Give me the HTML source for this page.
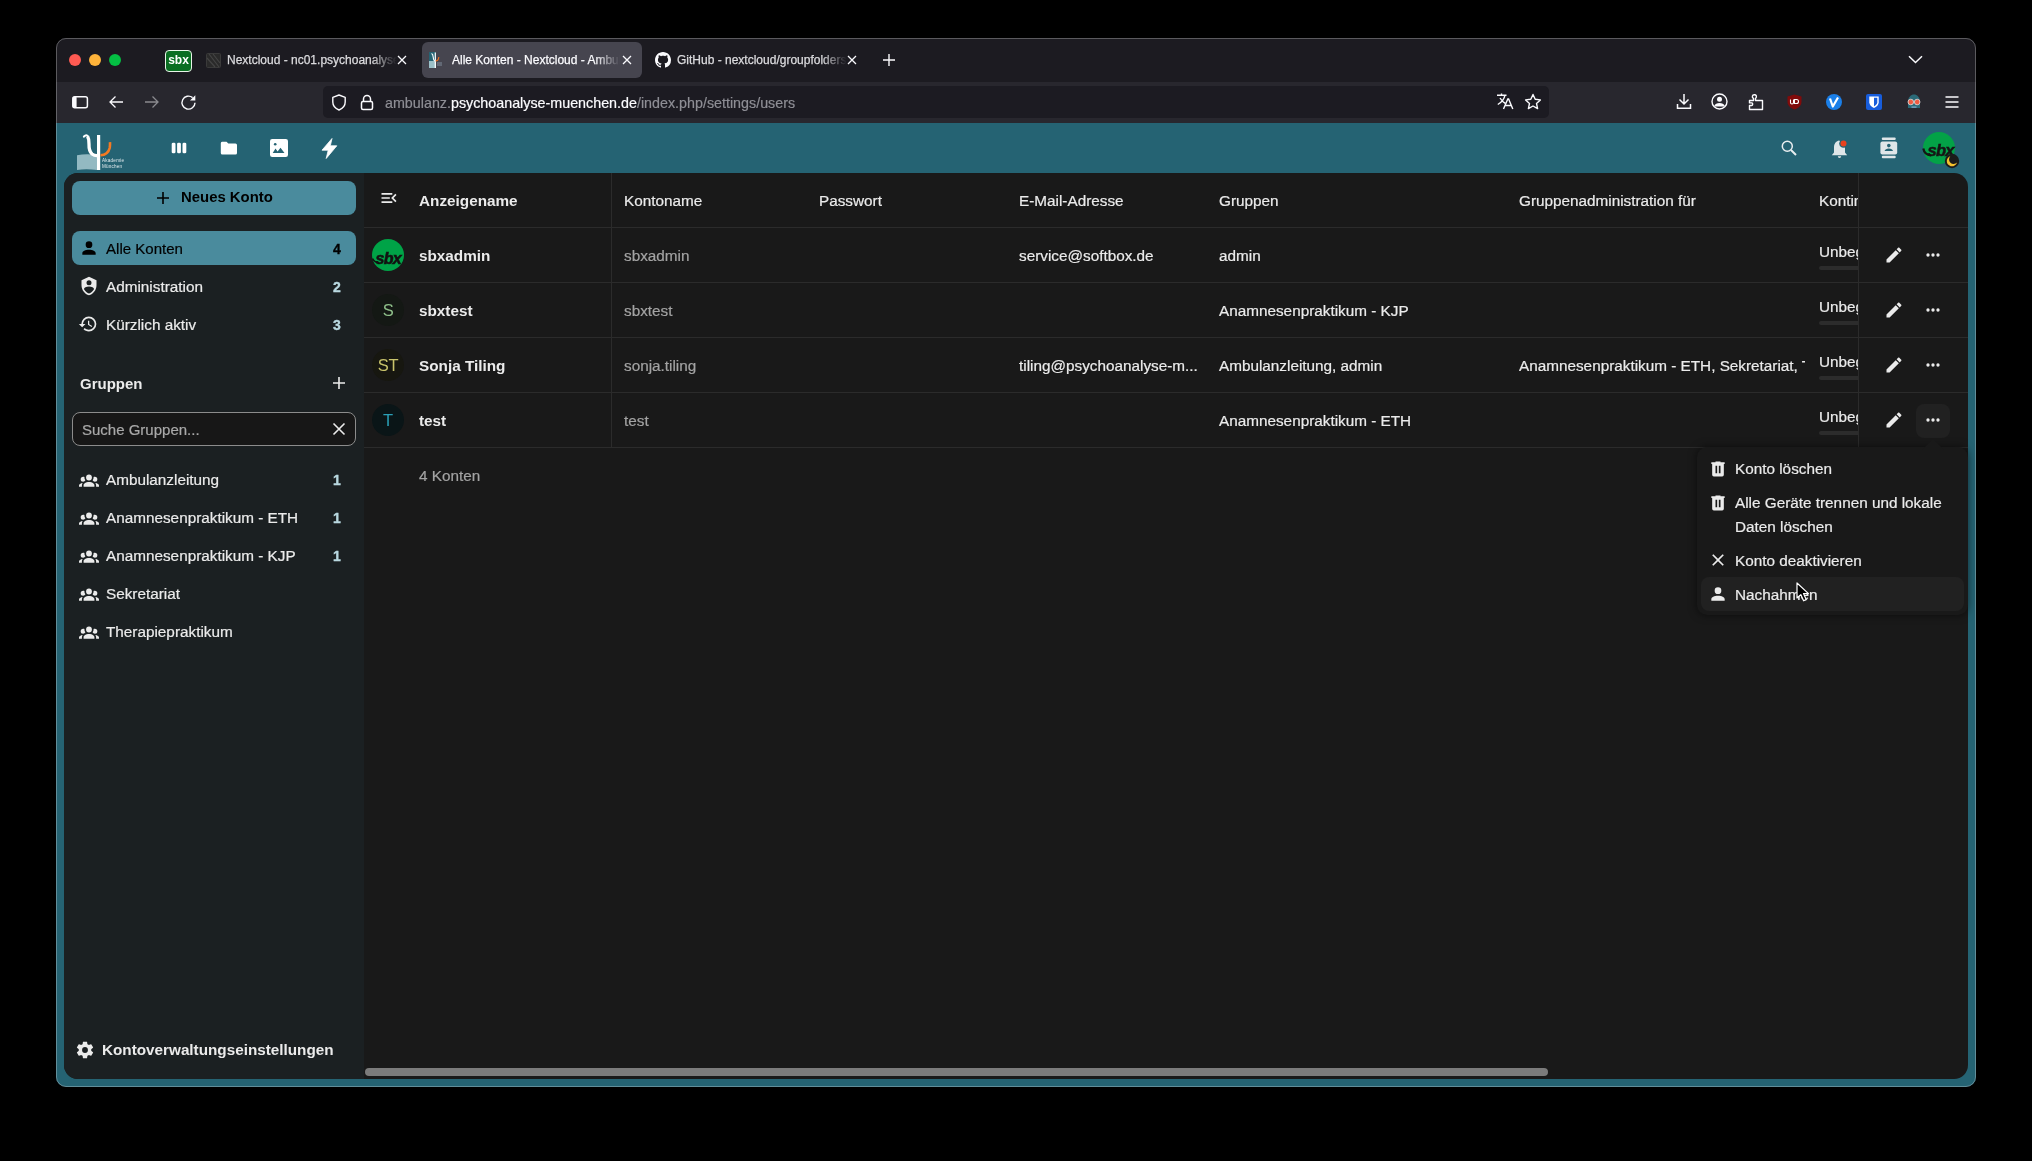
<!DOCTYPE html>
<html><head><meta charset="utf-8">
<style>
*{box-sizing:border-box;margin:0;padding:0}
html,body{width:2032px;height:1161px;overflow:hidden;background:#000;font-family:"Liberation Sans",sans-serif}
.a{position:absolute;will-change:transform}
svg{display:block}
#win{position:absolute;left:56px;top:38px;width:1920px;height:1049px;border-radius:10px;overflow:hidden;background:#1c1b22}
#winborder{position:absolute;left:56px;top:38px;width:1920px;height:1049px;border-radius:10px;border:1px solid rgba(255,255,255,0.28);pointer-events:none}
#tabs{position:absolute;left:0;top:0;width:1920px;height:44px;background:#1c1b21}
#toolbar{position:absolute;left:0;top:44px;width:1920px;height:41px;background:#28272e}
#nchead{position:absolute;left:0;top:85px;width:1920px;height:964px;background:#256373}
#content{position:absolute;left:8px;top:50px;width:1904px;height:906px;border-radius:14px;overflow:hidden;background:#191919}
#nav{position:absolute;left:0;top:0;width:300px;height:906px;background:#1b2022}
.tt{-webkit-text-stroke:0.25px currentColor;color:#fbfbfe;font-size:12px;white-space:nowrap;overflow:hidden}
.nc{font-size:15.3px;color:#ebebeb;white-space:nowrap;margin-top:1px}
.b{font-weight:700}
.cnt{-webkit-text-stroke:0.35px currentColor}
.nc:not(.b){-webkit-text-stroke:0.2px currentColor}
</style></head><body>
<div id="win">
  <div id="tabs"></div>
  <div id="toolbar"></div>
  <div id="nchead">
    <div id="content">
      <div id="nav"></div>
    </div>
  </div>
</div>
<!-- ============ TAB STRIP ============ -->
<div class="a" style="left:69px;top:54px;width:12px;height:12px;border-radius:50%;background:#fe5a52"></div>
<div class="a" style="left:89px;top:54px;width:12px;height:12px;border-radius:50%;background:#feb33a"></div>
<div class="a" style="left:109px;top:54px;width:12px;height:12px;border-radius:50%;background:#04bf43"></div>
<!-- pinned sbx -->
<div class="a" style="left:165px;top:50px;width:27px;height:22px;border-radius:4px;background:#0a6e22;border:1.5px solid #e8f5e8;color:#fff;font-weight:700;font-size:12px;line-height:19px;text-align:center;letter-spacing:0px">sbx</div>
<!-- tab 2 -->
<svg class="a" style="left:206px;top:53px" width="15" height="15" viewBox="0 0 15 15"><rect x="0.5" y="0.5" width="14" height="14" rx="1" fill="#2a2a2a" stroke="#3a3a3a"/><path d="M3 1L13 14M7 1L14 10M1 5L9 14" stroke="#444" stroke-width="1.2"/></svg>
<div class="a tt" style="left:227px;top:52px;width:170px;height:17px;line-height:17px;color:#dcdcdf;-webkit-mask-image:linear-gradient(90deg,#000 85%,transparent 100%)">Nextcloud - nc01.psychoanalyse-muenchen.de</div>
<svg class="a" style="left:396px;top:54px" width="12" height="12" viewBox="0 0 12 12"><path d="M2 2L10 10M10 2L2 10" stroke="#fbfbfe" stroke-width="1.3"/></svg>
<!-- active tab -->
<div class="a" style="left:422px;top:42px;width:220px;height:36px;border-radius:6px;background:#46454f"></div>
<svg class="a" style="left:429px;top:52px" width="17" height="16" viewBox="0 0 17 16"><rect x="0" y="0" width="7" height="9" fill="#256373"/><rect x="0" y="9" width="7" height="7" fill="#9cc0c8"/><path d="M2.5 1.5Q4 2 4.2 5Q4.5 9 6.5 9" stroke="#fff" stroke-width="1.1" fill="none"/><path d="M6.3 0.5V16" stroke="#fff" stroke-width="1.2"/><path d="M6.5 9Q9.5 9 9.8 5" stroke="#f07020" stroke-width="1.1" fill="none"/><path d="M8 11H13M8 13H13" stroke="#9ab" stroke-width="0.7"/></svg>
<div class="a tt" style="left:452px;top:52px;width:168px;height:17px;line-height:17px;color:#fbfbfe;-webkit-mask-image:linear-gradient(90deg,#000 85%,transparent 100%)">Alle Konten - Nextcloud - Ambulanz</div>
<svg class="a" style="left:621px;top:54px" width="12" height="12" viewBox="0 0 12 12"><path d="M2 2L10 10M10 2L2 10" stroke="#fbfbfe" stroke-width="1.3"/></svg>
<!-- github tab -->
<svg class="a" style="left:655px;top:52px" width="16" height="16" viewBox="0 0 16 16"><path fill="#fbfbfe" d="M8 0C3.58 0 0 3.58 0 8c0 3.54 2.29 6.53 5.47 7.59.4.07.55-.17.55-.38 0-.19-.01-.82-.01-1.49-2.01.37-2.53-.49-2.69-.94-.09-.23-.48-.94-.82-1.13-.28-.15-.68-.52-.01-.53.63-.01 1.08.58 1.23.82.72 1.21 1.87.87 2.33.66.07-.52.28-.87.51-1.07-1.78-.2-3.64-.89-3.64-3.95 0-.87.31-1.59.82-2.15-.08-.2-.36-1.02.08-2.12 0 0 .67-.21 2.2.82.64-.18 1.32-.27 2-.27.68 0 1.36.09 2 .27 1.53-1.04 2.2-.82 2.2-.82.44 1.1.16 1.92.08 2.12.51.56.82 1.27.82 2.15 0 3.07-1.87 3.75-3.65 3.95.29.25.54.73.54 1.48 0 1.07-.01 1.93-.01 2.2 0 .21.15.46.55.38A8.013 8.013 0 0016 8c0-4.42-3.58-8-8-8z"/></svg>
<div class="a tt" style="left:677px;top:52px;width:170px;height:17px;line-height:17px;color:#dcdcdf;-webkit-mask-image:linear-gradient(90deg,#000 85%,transparent 100%)">GitHub - nextcloud/groupfolders: Admin</div>
<svg class="a" style="left:846px;top:54px" width="12" height="12" viewBox="0 0 12 12"><path d="M2 2L10 10M10 2L2 10" stroke="#fbfbfe" stroke-width="1.3"/></svg>
<svg class="a" style="left:882px;top:53px" width="14" height="14" viewBox="0 0 14 14"><path d="M7 1V13M1 7H13" stroke="#fbfbfe" stroke-width="1.4"/></svg>
<svg class="a" style="left:1908px;top:55px" width="15" height="9" viewBox="0 0 15 9"><path d="M1 1.2L7.5 7.5L14 1.2" stroke="#fbfbfe" stroke-width="1.5" fill="none"/></svg>

<!-- ============ TOOLBAR ============ -->
<svg class="a" style="left:72px;top:96px" width="17" height="13" viewBox="0 0 17 13"><rect x="0.8" y="0.8" width="14.6" height="11" rx="2" fill="none" stroke="#fbfbfe" stroke-width="1.5"/><rect x="0.8" y="0.8" width="3.8" height="11" rx="1" fill="#fbfbfe"/></svg>
<svg class="a" style="left:108px;top:95px" width="16" height="14" viewBox="0 0 16 14"><path d="M15 7H2M7.5 1.5L2 7L7.5 12.5" stroke="#fbfbfe" stroke-width="1.3" fill="none"/></svg>
<svg class="a" style="left:144px;top:95px" width="16" height="14" viewBox="0 0 16 14"><path d="M1 7H14M8.5 1.5L14 7L8.5 12.5" stroke="#8a8a8f" stroke-width="1.3" fill="none"/></svg>
<svg class="a" style="left:180px;top:94px" width="17" height="17" viewBox="0 0 17 17"><path d="M15 8.8A6.5 6.5 0 1 1 12.6 3.6" stroke="#fbfbfe" stroke-width="1.4" fill="none"/><path d="M15.3 1.2V6.5H10Z" fill="#fbfbfe"/></svg>
<!-- url bar -->
<div class="a" style="left:323px;top:86px;width:1226px;height:32px;border-radius:5px;background:#1c1b22"></div>
<svg class="a" style="left:331px;top:94px" width="16" height="17" viewBox="0 0 16 17"><path d="M8 1L1.8 3.3V8C1.8 11.8 4.5 14.6 8 16C11.5 14.6 14.2 11.8 14.2 8V3.3Z" stroke="#fbfbfe" stroke-width="1.4" fill="none" stroke-linejoin="round"/></svg>
<svg class="a" style="left:360px;top:94px" width="14" height="17" viewBox="0 0 14 17"><path d="M3.5 7.5V5A3.5 3.5 0 0 1 10.5 5V7.5" stroke="#fbfbfe" stroke-width="1.5" fill="none"/><rect x="1.5" y="7.5" width="11" height="8" rx="1.5" stroke="#fbfbfe" stroke-width="1.5" fill="none"/></svg>
<div class="a" style="left:385px;top:94px;height:18px;line-height:18px;font-size:14.3px;color:#8e8e95;white-space:nowrap;-webkit-text-stroke:0.2px currentColor">ambulanz.<span style="color:#fbfbfe">psychoanalyse-muenchen.de</span>/index.php/settings/users</div>
<svg class="a" style="left:1496px;top:93px" width="18" height="17" viewBox="0 0 18 17"><path d="M1 2.2H10.5M5.5 0.5V2.2M9 2.2C8.2 6 5.5 9.5 1.8 11.5M4 5C5.5 7.5 7.5 9.5 9.5 10.5" stroke="#fbfbfe" stroke-width="1.4" fill="none"/><path d="M7.5 16L11.8 6H12.6L16.8 16M9 12.5H15.3" stroke="#fbfbfe" stroke-width="1.4" fill="none"/></svg>
<svg class="a" style="left:1524px;top:93px" width="18" height="18" viewBox="0 0 18 18"><path d="M9 1.5L11.2 6.3L16.4 6.9L12.5 10.4L13.6 15.6L9 13L4.4 15.6L5.5 10.4L1.6 6.9L6.8 6.3Z" stroke="#fbfbfe" stroke-width="1.4" fill="none" stroke-linejoin="round"/></svg>
<!-- right toolbar icons -->
<svg class="a" style="left:1676px;top:93px" width="16" height="17" viewBox="0 0 16 17"><path d="M8 1V11M3.5 6.5L8 11L12.5 6.5M1.5 11V15.3H14.5V11" stroke="#fbfbfe" stroke-width="1.5" fill="none"/></svg>
<svg class="a" style="left:1711px;top:93px" width="17" height="17" viewBox="0 0 17 17"><circle cx="8.5" cy="8.5" r="7.5" stroke="#fbfbfe" stroke-width="1.4" fill="none"/><circle cx="8.5" cy="6.3" r="2.5" fill="#fbfbfe"/><path d="M3.5 12.5Q4.5 10 8.5 10Q12.5 10 13.5 12.5V13.5H3.5Z" fill="#fbfbfe"/></svg>
<svg class="a" style="left:1748px;top:93px" width="17" height="18" viewBox="0 0 17 18"><path d="M1.5 7.5H5.5V5.5C4.5 5 4.2 4 4.4 3.2C4.8 1.5 7.5 1.2 8.3 2.8C8.7 3.8 8.3 4.8 7.5 5.5V7.5H14.5V16.5H1.5V12.5H3.5C4.5 12.3 4.8 11.5 4.6 10.8C4.4 10 3.5 9.7 2.8 9.9H1.5Z" stroke="#fbfbfe" stroke-width="1.4" fill="none" stroke-linejoin="round"/></svg>
<svg class="a" style="left:1787px;top:94px" width="15" height="16" viewBox="0 0 15 16"><path d="M7.5 0.5L14.5 2.5V8C14.5 11.5 11.5 14.2 7.5 15.5C3.5 14.2 0.5 11.5 0.5 8V2.5Z" fill="#800b0b"/><path d="M3.5 5.5V8.5A1.5 1.5 0 0 0 6.5 8.5V5.5M7.5 5.5H9.5A2 2 0 0 1 9.5 9.5H7.5Z" stroke="#fff" stroke-width="1.1" fill="none"/></svg>
<svg class="a" style="left:1826px;top:94px" width="16" height="16" viewBox="0 0 16 16"><circle cx="8" cy="8" r="8" fill="#1b7fe8"/><path d="M4 4.5L6.8 12.5L12 3.5" stroke="#fff" stroke-width="2.2" fill="none" stroke-linejoin="round"/></svg>
<svg class="a" style="left:1866px;top:94px" width="16" height="16" viewBox="0 0 16 16"><rect width="16" height="16" rx="2" fill="#175ddc"/><path d="M3.3 2.5H12.7V8.3C12.7 11 10.5 12.8 8 14C5.5 12.8 3.3 11 3.3 8.3Z" fill="#fff"/><path d="M8 3.8H11.3V8.3C11.3 10 9.8 11.3 8 12.3Z" fill="#175ddc"/></svg>
<svg class="a" style="left:1906px;top:94px" width="16" height="16" viewBox="0 0 16 16"><path d="M2 8C2 3 5 0.5 8 0.5C11 0.5 14 3 14 8V14H2Z" fill="#2a6a78"/><circle cx="4.8" cy="8" r="2.8" fill="#f05a40" stroke="#ddd" stroke-width="0.8"/><circle cx="11.2" cy="8" r="2.8" fill="#f05a40" stroke="#ddd" stroke-width="0.8"/><rect x="5.5" y="12.5" width="5" height="1.2" fill="#8ac"/></svg>
<svg class="a" style="left:1945px;top:96px" width="14" height="12" viewBox="0 0 14 12"><path d="M0.5 1H13.5M0.5 6H13.5M0.5 11H13.5" stroke="#fbfbfe" stroke-width="1.5"/></svg>

<!-- ============ NC HEADER ============ -->
<svg class="a" style="left:70px;top:128px" width="60" height="47" viewBox="0 0 60 47">
 <path d="M7 27.3Q16 25.5 27 27V42Q16 40.5 7 42Z" fill="#93b9c2"/>
 <rect x="27" y="7" width="3.2" height="35" fill="#fff"/>
 <path d="M14 8.6Q16.5 6 18 8.5" stroke="#fff" stroke-width="2.2" fill="none" stroke-linecap="round"/><path d="M17.6 8.3Q19.2 11 19 16Q18.8 23 22 26Q24.5 27.8 27.5 27.6" stroke="#fff" stroke-width="3.3" fill="none"/>
 <path d="M30.5 27.3Q38 27 39.7 20Q40.2 17 40 14.2" stroke="#f47a22" stroke-width="2.6" fill="none"/>
 <text x="32" y="34" font-size="4.6" fill="#dfe9ec" font-family="Liberation Sans" textLength="22">Akademie</text>
 <text x="32" y="39.8" font-size="4.6" fill="#dfe9ec" font-family="Liberation Sans" textLength="20">München</text>
</svg>
<svg class="a" style="left:171px;top:142px" width="16" height="12" viewBox="0 0 16 12"><rect x="0.7" y="0.7" width="3.8" height="10.6" rx="1.4" fill="#fff"/><rect x="6.1" y="0.7" width="3.8" height="10.6" rx="1.4" fill="#fff"/><rect x="11.5" y="0.7" width="3.8" height="10.6" rx="1.4" fill="#fff"/></svg>
<svg class="a" style="left:220px;top:141px" width="18" height="14" viewBox="0 0 18 14"><path d="M2 0.8H6.5L8.3 2.6H15.5A1.5 1.5 0 0 1 17 4.1V12A1.5 1.5 0 0 1 15.5 13.5H2.3A1.5 1.5 0 0 1 0.8 12V2.2A1.4 1.4 0 0 1 2 0.8Z" fill="#fff"/></svg>
<svg class="a" style="left:269px;top:138px" width="20" height="20" viewBox="0 0 20 20"><rect x="1" y="1" width="18" height="18" rx="2.2" fill="#fff"/><circle cx="6.2" cy="6.2" r="1.3" fill="#256373"/><path d="M3.7 15L6.5 10.5L8.6 13.5L11.5 9.8L15.5 15Z" fill="#256373"/></svg>
<svg class="a" style="left:321px;top:138px" width="17" height="21" viewBox="0 0 17 21"><path d="M11 0.5L1 12.2H7.2L5.2 20.5L15.8 7.8H9.3Z" fill="#fff" stroke="#fff" stroke-width="0.8" stroke-linejoin="round"/></svg>
<!-- right header -->
<svg class="a" style="left:1780px;top:139px" width="18" height="18" viewBox="0 0 18 18"><circle cx="7.3" cy="7.3" r="5" stroke="#e9eef0" stroke-width="1.5" fill="none"/><path d="M11 11L16 16" stroke="#e9eef0" stroke-width="1.9"/></svg>
<svg class="a" style="left:1830px;top:138px" width="20" height="20" viewBox="0 0 20 20"><path d="M9.3 2.5C5.6 3.2 4 6 4 9.5V14.5L1.8 17.2H17.2L15 14.5V9.5" fill="#dfe6e8"/><path d="M7.8 18.2H11.2A1.7 1.7 0 0 1 7.8 18.2Z" fill="#dfe6e8"/><circle cx="13.5" cy="5.5" r="4.3" fill="#256373"/><circle cx="13.5" cy="5.5" r="3" fill="#e8421e"/></svg>
<svg class="a" style="left:1879px;top:137px" width="20" height="22" viewBox="0 0 20 22"><rect x="2.8" y="0.6" width="13.9" height="2.4" rx="1" fill="#dfe6e8"/><rect x="2.8" y="18.8" width="13.9" height="2.4" rx="1" fill="#dfe6e8"/><rect x="1.4" y="4.4" width="16.8" height="13" rx="2" fill="#dfe6e8"/><circle cx="9.8" cy="8.6" r="1.8" fill="#256373"/><path d="M5.6 13.9Q6.3 11.4 9.8 11.4Q13.3 11.4 14 13.9Z" fill="#256373"/></svg>
<svg class="a" style="left:1922px;top:131px" width="38" height="38" viewBox="0 0 38 38">
 <circle cx="17" cy="17" r="16" fill="#03a247"/>
 <text x="5.5" y="25" font-size="16.5" font-weight="700" font-style="italic" fill="#151515" stroke="#151515" stroke-width="0.5" font-family="Liberation Sans" letter-spacing="-0.8">sbx</text>
 <path d="M1.3 17.5Q2.5 24 9 24.3" stroke="#151515" stroke-width="2.2" fill="none"/>
 <circle cx="30" cy="30" r="7.2" fill="#1b1b1b"/>
 <path d="M28.3 25.2A5.2 5.2 0 1 0 35 31.6A4.2 4.2 0 0 1 28.3 25.2Z" fill="#f5c12e"/>
</svg>

<!-- ============ NAVIGATION ============ -->
<div class="a" style="left:72px;top:181px;width:284px;height:34px;border-radius:8px;background:#4a8b9d"></div>
<svg class="a" style="left:156px;top:191px" width="14" height="14" viewBox="0 0 14 14"><path d="M7 1V13M1 7H13" stroke="#000" stroke-width="1.6"/></svg>
<div class="a nc b" style="left:181px;top:187px;line-height:18px;color:#000;font-size:14.9px">Neues Konto</div>

<div class="a" style="left:72px;top:231px;width:284px;height:34px;border-radius:8px;background:#4a8b9d"></div>
<svg class="a nv" style="left:79px;top:238px" width="20" height="20" viewBox="0 0 24 24"><path fill="#000" d="M12,4A4,4 0 0,1 16,8A4,4 0 0,1 12,12A4,4 0 0,1 8,8A4,4 0 0,1 12,4M12,14C16.42,14 20,15.79 20,18V20H4V18C4,15.79 7.58,14 12,14Z"/></svg>
<div class="a nc" style="left:106px;top:239px;line-height:18px;color:#000;font-size:15.05px">Alle Konten</div>
<div class="a nc b cnt" style="left:327px;top:239px;width:20px;text-align:center;line-height:18px;color:#000;font-size:14px">4</div>

<svg class="a" style="left:79px;top:276px" width="20" height="20" viewBox="0 0 24 24"><path fill="#ebebeb" d="M12,1L3,5V11C3,16.55 6.84,21.74 12,23C17.16,21.74 21,16.55 21,11V5L12,1M12,5A3,3 0 0,1 15,8A3,3 0 0,1 12,11A3,3 0 0,1 9,8A3,3 0 0,1 12,5M17.13,17C15.92,18.85 14.11,20.24 12,20.92C9.89,20.24 8.08,18.85 6.87,17C6.53,16.5 6.24,16 6,15.47C6,13.82 8.71,12.47 12,12.47C15.29,12.47 18,13.79 18,15.47C17.76,16 17.47,16.5 17.13,17Z"/></svg>
<div class="a nc" style="left:106px;top:277px;line-height:18px;font-size:15.3px">Administration</div>
<div class="a nc b cnt" style="left:327px;top:277px;width:20px;text-align:center;line-height:18px;color:#b9d8e0;font-size:14px">2</div>

<svg class="a" style="left:78px;top:314px" width="20" height="20" viewBox="0 0 24 24"><path fill="#ebebeb" d="M13.5,8H12V13L16.28,15.54L17,14.33L13.5,12.25V8M13,3A9,9 0 0,0 4,12H1L4.96,16.03L9,12H6A7,7 0 0,1 13,5A7,7 0 0,1 20,12A7,7 0 0,1 13,19C11.07,19 9.32,18.21 8.06,16.94L6.64,18.36C8.27,20 10.5,21 13,21A9,9 0 0,0 22,12A9,9 0 0,0 13,3"/></svg>
<div class="a nc" style="left:106px;top:315px;line-height:18px;font-size:15.3px">Kürzlich aktiv</div>
<div class="a nc b cnt" style="left:327px;top:315px;width:20px;text-align:center;line-height:18px;color:#b9d8e0;font-size:14px">3</div>

<div class="a nc b" style="left:80px;top:374px;line-height:18px;font-size:15px">Gruppen</div>
<svg class="a" style="left:332px;top:376px" width="14" height="14" viewBox="0 0 14 14"><path d="M7 1V13M1 7H13" stroke="#ebebeb" stroke-width="1.6"/></svg>

<div class="a" style="left:72px;top:412px;width:284px;height:34px;border-radius:8px;background:#171717;border:1.5px solid #8c8c8c"></div>
<div class="a nc" style="left:82px;top:420px;line-height:18px;font-size:15px;color:#a9a9a9">Suche Gruppen...</div>
<svg class="a" style="left:332px;top:422px" width="14" height="14" viewBox="0 0 14 14"><path d="M1.5 1.5L12.5 12.5M12.5 1.5L1.5 12.5" stroke="#ebebeb" stroke-width="1.6"/></svg>
<svg class="a" style="left:79px;top:470px" width="20" height="20" viewBox="0 0 24 24"><path fill="#ebebeb" d="M12,5.5A3.5,3.5 0 0,1 15.5,9A3.5,3.5 0 0,1 12,12.5A3.5,3.5 0 0,1 8.5,9A3.5,3.5 0 0,1 12,5.5M5,8C5.56,8 6.08,8.15 6.53,8.42C6.38,9.85 6.8,11.27 7.66,12.38C7.16,13.34 6.16,14 5,14A3,3 0 0,1 2,11A3,3 0 0,1 5,8M19,8A3,3 0 0,1 22,11A3,3 0 0,1 19,14C17.84,14 16.84,13.34 16.34,12.38C17.2,11.27 17.62,9.85 17.47,8.42C17.92,8.15 18.44,8 19,8M5.5,18.25C5.5,16.18 8.41,14.5 12,14.5C15.59,14.5 18.5,16.18 18.5,18.25V20H5.5V18.25M0,20V18.5C0,17.11 1.89,15.94 4.45,15.6C3.86,16.28 3.5,17.22 3.5,18.25V20H0M24,20H20.5V18.25C20.5,17.22 20.14,16.28 19.55,15.6C22.11,15.94 24,17.11 24,18.5V20Z"/></svg>
<div class="a nc" style="left:106px;top:470px;line-height:18px;font-size:15.3px">Ambulanzleitung</div>
<div class="a nc b cnt" style="left:327px;top:470px;width:20px;text-align:center;line-height:18px;color:#b9d8e0;font-size:14px">1</div>
<svg class="a" style="left:79px;top:508px" width="20" height="20" viewBox="0 0 24 24"><path fill="#ebebeb" d="M12,5.5A3.5,3.5 0 0,1 15.5,9A3.5,3.5 0 0,1 12,12.5A3.5,3.5 0 0,1 8.5,9A3.5,3.5 0 0,1 12,5.5M5,8C5.56,8 6.08,8.15 6.53,8.42C6.38,9.85 6.8,11.27 7.66,12.38C7.16,13.34 6.16,14 5,14A3,3 0 0,1 2,11A3,3 0 0,1 5,8M19,8A3,3 0 0,1 22,11A3,3 0 0,1 19,14C17.84,14 16.84,13.34 16.34,12.38C17.2,11.27 17.62,9.85 17.47,8.42C17.92,8.15 18.44,8 19,8M5.5,18.25C5.5,16.18 8.41,14.5 12,14.5C15.59,14.5 18.5,16.18 18.5,18.25V20H5.5V18.25M0,20V18.5C0,17.11 1.89,15.94 4.45,15.6C3.86,16.28 3.5,17.22 3.5,18.25V20H0M24,20H20.5V18.25C20.5,17.22 20.14,16.28 19.55,15.6C22.11,15.94 24,17.11 24,18.5V20Z"/></svg>
<div class="a nc" style="left:106px;top:508px;line-height:18px;font-size:15.3px">Anamnesenpraktikum - ETH</div>
<div class="a nc b cnt" style="left:327px;top:508px;width:20px;text-align:center;line-height:18px;color:#b9d8e0;font-size:14px">1</div>
<svg class="a" style="left:79px;top:546px" width="20" height="20" viewBox="0 0 24 24"><path fill="#ebebeb" d="M12,5.5A3.5,3.5 0 0,1 15.5,9A3.5,3.5 0 0,1 12,12.5A3.5,3.5 0 0,1 8.5,9A3.5,3.5 0 0,1 12,5.5M5,8C5.56,8 6.08,8.15 6.53,8.42C6.38,9.85 6.8,11.27 7.66,12.38C7.16,13.34 6.16,14 5,14A3,3 0 0,1 2,11A3,3 0 0,1 5,8M19,8A3,3 0 0,1 22,11A3,3 0 0,1 19,14C17.84,14 16.84,13.34 16.34,12.38C17.2,11.27 17.62,9.85 17.47,8.42C17.92,8.15 18.44,8 19,8M5.5,18.25C5.5,16.18 8.41,14.5 12,14.5C15.59,14.5 18.5,16.18 18.5,18.25V20H5.5V18.25M0,20V18.5C0,17.11 1.89,15.94 4.45,15.6C3.86,16.28 3.5,17.22 3.5,18.25V20H0M24,20H20.5V18.25C20.5,17.22 20.14,16.28 19.55,15.6C22.11,15.94 24,17.11 24,18.5V20Z"/></svg>
<div class="a nc" style="left:106px;top:546px;line-height:18px;font-size:15.3px">Anamnesenpraktikum - KJP</div>
<div class="a nc b cnt" style="left:327px;top:546px;width:20px;text-align:center;line-height:18px;color:#b9d8e0;font-size:14px">1</div>
<svg class="a" style="left:79px;top:584px" width="20" height="20" viewBox="0 0 24 24"><path fill="#ebebeb" d="M12,5.5A3.5,3.5 0 0,1 15.5,9A3.5,3.5 0 0,1 12,12.5A3.5,3.5 0 0,1 8.5,9A3.5,3.5 0 0,1 12,5.5M5,8C5.56,8 6.08,8.15 6.53,8.42C6.38,9.85 6.8,11.27 7.66,12.38C7.16,13.34 6.16,14 5,14A3,3 0 0,1 2,11A3,3 0 0,1 5,8M19,8A3,3 0 0,1 22,11A3,3 0 0,1 19,14C17.84,14 16.84,13.34 16.34,12.38C17.2,11.27 17.62,9.85 17.47,8.42C17.92,8.15 18.44,8 19,8M5.5,18.25C5.5,16.18 8.41,14.5 12,14.5C15.59,14.5 18.5,16.18 18.5,18.25V20H5.5V18.25M0,20V18.5C0,17.11 1.89,15.94 4.45,15.6C3.86,16.28 3.5,17.22 3.5,18.25V20H0M24,20H20.5V18.25C20.5,17.22 20.14,16.28 19.55,15.6C22.11,15.94 24,17.11 24,18.5V20Z"/></svg>
<div class="a nc" style="left:106px;top:584px;line-height:18px;font-size:15.3px">Sekretariat</div>
<svg class="a" style="left:79px;top:622px" width="20" height="20" viewBox="0 0 24 24"><path fill="#ebebeb" d="M12,5.5A3.5,3.5 0 0,1 15.5,9A3.5,3.5 0 0,1 12,12.5A3.5,3.5 0 0,1 8.5,9A3.5,3.5 0 0,1 12,5.5M5,8C5.56,8 6.08,8.15 6.53,8.42C6.38,9.85 6.8,11.27 7.66,12.38C7.16,13.34 6.16,14 5,14A3,3 0 0,1 2,11A3,3 0 0,1 5,8M19,8A3,3 0 0,1 22,11A3,3 0 0,1 19,14C17.84,14 16.84,13.34 16.34,12.38C17.2,11.27 17.62,9.85 17.47,8.42C17.92,8.15 18.44,8 19,8M5.5,18.25C5.5,16.18 8.41,14.5 12,14.5C15.59,14.5 18.5,16.18 18.5,18.25V20H5.5V18.25M0,20V18.5C0,17.11 1.89,15.94 4.45,15.6C3.86,16.28 3.5,17.22 3.5,18.25V20H0M24,20H20.5V18.25C20.5,17.22 20.14,16.28 19.55,15.6C22.11,15.94 24,17.11 24,18.5V20Z"/></svg>
<div class="a nc" style="left:106px;top:622px;line-height:18px;font-size:15.3px">Therapiepraktikum</div>
<svg class="a" style="left:75px;top:1040px" width="20" height="20" viewBox="0 0 24 24"><path fill="#ebebeb" d="M12,15.5A3.5,3.5 0 0,1 8.5,12A3.5,3.5 0 0,1 12,8.5A3.5,3.5 0 0,1 15.5,12A3.5,3.5 0 0,1 12,15.5M19.43,12.97C19.47,12.65 19.5,12.33 19.5,12C19.5,11.67 19.47,11.34 19.43,11L21.54,9.37C21.73,9.22 21.78,8.95 21.66,8.73L19.66,5.27C19.54,5.05 19.27,4.96 19.050,5.05L16.56,6.05C16.04,5.66 15.5,5.32 14.87,5.07L14.5,2.42C14.46,2.18 14.25,2 14,2H10C9.75,2 9.54,2.18 9.5,2.42L9.13,5.07C8.5,5.32 7.96,5.66 7.44,6.05L4.95,5.05C4.73,4.96 4.46,5.05 4.34,5.27L2.34,8.73C2.21,8.95 2.27,9.22 2.46,9.37L4.57,11C4.53,11.34 4.5,11.67 4.5,12C4.5,12.33 4.53,12.65 4.57,12.97L2.46,14.63C2.27,14.78 2.21,15.05 2.34,15.27L4.34,18.73C4.46,18.950 4.73,19.03 4.95,18.95L7.44,17.94C7.96,18.34 8.5,18.68 9.13,18.93L9.5,21.58C9.54,21.82 9.75,22 10,22H14C14.25,22 14.46,21.82 14.5,21.58L14.87,18.93C15.5,18.67 16.04,18.34 16.56,17.94L19.05,18.95C19.27,19.03 19.54,18.95 19.66,18.73L21.66,15.27C21.78,15.05 21.73,14.78 21.54,14.63L19.43,12.97Z"/></svg>
<div class="a nc b" style="left:102px;top:1040px;line-height:18px;font-size:15.27px">Kontoverwaltungseinstellungen</div>
<svg class="a" style="left:379px;top:188px" width="20" height="20" viewBox="0 0 24 24"><path fill="#ebebeb" d="M21,15.61L19.59,17L14.58,12L19.59,7L21,8.39L17.44,12L21,15.61M3,6H16V8H3V6M3,13V11H13V13H3M3,18V16H16V18H3Z"/></svg>
<div class="a nc b" style="left:419px;top:191px;line-height:18px">Anzeigename</div>
<div class="a nc" style="left:624px;top:191px;line-height:18px">Kontoname</div>
<div class="a nc" style="left:819px;top:191px;line-height:18px">Passwort</div>
<div class="a nc" style="left:1019px;top:191px;line-height:18px">E-Mail-Adresse</div>
<div class="a nc" style="left:1219px;top:191px;line-height:18px">Gruppen</div>
<div class="a nc" style="left:1519px;top:191px;line-height:18px">Gruppenadministration für</div>
<div class="a" style="left:1819px;top:191px;width:39px;overflow:hidden"><div class="nc" style="line-height:18px">Kontingent</div></div>
<div class="a" style="left:364px;top:227px;width:1604px;height:1px;background:#2b2b2b"></div>
<div class="a" style="left:364px;top:282px;width:1604px;height:1px;background:#2b2b2b"></div>
<div class="a" style="left:364px;top:337px;width:1604px;height:1px;background:#2b2b2b"></div>
<div class="a" style="left:364px;top:392px;width:1604px;height:1px;background:#2b2b2b"></div>
<div class="a" style="left:364px;top:447px;width:1604px;height:1px;background:#2b2b2b"></div>
<div class="a" style="left:611px;top:173px;width:1px;height:274px;background:#2b2b2b"></div>
<div class="a" style="left:1858px;top:173px;width:1px;height:274px;background:#2b2b2b"></div>
<svg class="a" style="left:372px;top:239px" width="34" height="32" viewBox="0 0 34 32"><circle cx="16" cy="16" r="16" fill="#00a347"/><text x="3.5" y="24.6" font-size="16" font-weight="700" font-style="italic" fill="#121212" stroke="#121212" stroke-width="0.6" font-family="Liberation Sans" letter-spacing="-0.7">sbx</text><path d="M0.5 19.5Q2.5 23.5 7 23.5" stroke="#121212" stroke-width="1.6" fill="none"/></svg>
<div class="a nc b" style="left:419px;top:246px;line-height:18px">sbxadmin</div>
<div class="a nc" style="left:624px;top:246px;line-height:18px;color:#a3a3a3">sbxadmin</div>
<div class="a nc" style="left:1019px;top:246px;line-height:18px">service@softbox.de</div>
<div class="a nc" style="left:1219px;top:246px;line-height:18px">admin</div>
<div class="a" style="left:1819px;top:242px;width:39px;overflow:hidden"><div class="nc" style="line-height:18px">Unbegrenzt</div></div>
<div class="a" style="left:1819px;top:266px;width:39px;height:4px;border-radius:2px 0 0 2px;background:#2c2c2c"></div>
<svg class="a" style="left:1884px;top:245px" width="20" height="20" viewBox="0 0 24 24"><path fill="#ebebeb" d="M20.71,7.04C21.1,6.65 21.1,6 20.71,5.63L18.37,3.29C18,2.9 17.35,2.9 16.96,3.29L15.12,5.12L18.87,8.87M3,17.25V21H6.75L17.81,9.93L14.06,6.18L3,17.25Z"/></svg>
<svg class="a" style="left:1923px;top:245px" width="20" height="20" viewBox="0 0 24 24"><path fill="#ebebeb" d="M16,12A2,2 0 0,1 18,10A2,2 0 0,1 20,12A2,2 0 0,1 18,14A2,2 0 0,1 16,12M10,12A2,2 0 0,1 12,10A2,2 0 0,1 14,12A2,2 0 0,1 12,14A2,2 0 0,1 10,12M4,12A2,2 0 0,1 6,10A2,2 0 0,1 8,12A2,2 0 0,1 6,14A2,2 0 0,1 4,12Z"/></svg>
<div class="a" style="left:372px;top:294px;width:32px;height:32px;border-radius:50%;background:#141814;color:#8fc08a;font-size:16.5px;line-height:33px;text-align:center;letter-spacing:-0.3px">S</div>
<div class="a nc b" style="left:419px;top:301px;line-height:18px">sbxtest</div>
<div class="a nc" style="left:624px;top:301px;line-height:18px;color:#a3a3a3">sbxtest</div>
<div class="a nc" style="left:1219px;top:301px;line-height:18px">Anamnesenpraktikum - KJP</div>
<div class="a" style="left:1819px;top:297px;width:39px;overflow:hidden"><div class="nc" style="line-height:18px">Unbegrenzt</div></div>
<div class="a" style="left:1819px;top:321px;width:39px;height:4px;border-radius:2px 0 0 2px;background:#2c2c2c"></div>
<svg class="a" style="left:1884px;top:300px" width="20" height="20" viewBox="0 0 24 24"><path fill="#ebebeb" d="M20.71,7.04C21.1,6.65 21.1,6 20.71,5.63L18.37,3.29C18,2.9 17.35,2.9 16.96,3.29L15.12,5.12L18.87,8.87M3,17.25V21H6.75L17.81,9.93L14.06,6.18L3,17.25Z"/></svg>
<svg class="a" style="left:1923px;top:300px" width="20" height="20" viewBox="0 0 24 24"><path fill="#ebebeb" d="M16,12A2,2 0 0,1 18,10A2,2 0 0,1 20,12A2,2 0 0,1 18,14A2,2 0 0,1 16,12M10,12A2,2 0 0,1 12,10A2,2 0 0,1 14,12A2,2 0 0,1 12,14A2,2 0 0,1 10,12M4,12A2,2 0 0,1 6,10A2,2 0 0,1 8,12A2,2 0 0,1 6,14A2,2 0 0,1 4,12Z"/></svg>
<div class="a" style="left:372px;top:349px;width:32px;height:32px;border-radius:50%;background:#171710;color:#c9c46c;font-size:16.5px;line-height:33px;text-align:center;letter-spacing:-0.3px">ST</div>
<div class="a nc b" style="left:419px;top:356px;line-height:18px">Sonja Tiling</div>
<div class="a nc" style="left:624px;top:356px;line-height:18px;color:#a3a3a3">sonja.tiling</div>
<div class="a nc" style="left:1019px;top:356px;line-height:18px">tiling@psychoanalyse-m...</div>
<div class="a nc" style="left:1219px;top:356px;line-height:18px">Ambulanzleitung, admin</div>
<div class="a" style="left:1519px;top:356px;width:286px;overflow:hidden"><div class="nc" style="line-height:18px">Anamnesenpraktikum - ETH, Sekretariat, Therapiepraktikum</div></div>
<div class="a" style="left:1819px;top:352px;width:39px;overflow:hidden"><div class="nc" style="line-height:18px">Unbegrenzt</div></div>
<div class="a" style="left:1819px;top:376px;width:39px;height:4px;border-radius:2px 0 0 2px;background:#2c2c2c"></div>
<svg class="a" style="left:1884px;top:355px" width="20" height="20" viewBox="0 0 24 24"><path fill="#ebebeb" d="M20.71,7.04C21.1,6.65 21.1,6 20.71,5.63L18.37,3.29C18,2.9 17.35,2.9 16.96,3.29L15.12,5.12L18.87,8.87M3,17.25V21H6.75L17.81,9.93L14.06,6.18L3,17.25Z"/></svg>
<svg class="a" style="left:1923px;top:355px" width="20" height="20" viewBox="0 0 24 24"><path fill="#ebebeb" d="M16,12A2,2 0 0,1 18,10A2,2 0 0,1 20,12A2,2 0 0,1 18,14A2,2 0 0,1 16,12M10,12A2,2 0 0,1 12,10A2,2 0 0,1 14,12A2,2 0 0,1 12,14A2,2 0 0,1 10,12M4,12A2,2 0 0,1 6,10A2,2 0 0,1 8,12A2,2 0 0,1 6,14A2,2 0 0,1 4,12Z"/></svg>
<div class="a" style="left:372px;top:404px;width:32px;height:32px;border-radius:50%;background:#0a1517;color:#2a9fb6;font-size:16.5px;line-height:33px;text-align:center;letter-spacing:-0.3px">T</div>
<div class="a nc b" style="left:419px;top:411px;line-height:18px">test</div>
<div class="a nc" style="left:624px;top:411px;line-height:18px;color:#a3a3a3">test</div>
<div class="a nc" style="left:1219px;top:411px;line-height:18px">Anamnesenpraktikum - ETH</div>
<div class="a" style="left:1819px;top:407px;width:39px;overflow:hidden"><div class="nc" style="line-height:18px">Unbegrenzt</div></div>
<div class="a" style="left:1819px;top:431px;width:39px;height:4px;border-radius:2px 0 0 2px;background:#2c2c2c"></div>
<svg class="a" style="left:1884px;top:410px" width="20" height="20" viewBox="0 0 24 24"><path fill="#ebebeb" d="M20.71,7.04C21.1,6.65 21.1,6 20.71,5.63L18.37,3.29C18,2.9 17.35,2.9 16.96,3.29L15.12,5.12L18.87,8.87M3,17.25V21H6.75L17.81,9.93L14.06,6.18L3,17.25Z"/></svg>
<div class="a" style="left:1916px;top:404px;width:34px;height:34px;border-radius:8px;background:#212121"></div>
<svg class="a" style="left:1923px;top:410px" width="20" height="20" viewBox="0 0 24 24"><path fill="#ebebeb" d="M16,12A2,2 0 0,1 18,10A2,2 0 0,1 20,12A2,2 0 0,1 18,14A2,2 0 0,1 16,12M10,12A2,2 0 0,1 12,10A2,2 0 0,1 14,12A2,2 0 0,1 12,14A2,2 0 0,1 10,12M4,12A2,2 0 0,1 6,10A2,2 0 0,1 8,12A2,2 0 0,1 6,14A2,2 0 0,1 4,12Z"/></svg>
<div class="a nc" style="left:419px;top:466px;line-height:18px;color:#a3a3a3">4 Konten</div>
<div class="a" style="left:365px;top:1068px;width:1183px;height:8px;border-radius:4px;background:#7b7b7b"></div>
<div class="a" style="left:1697px;top:447px;width:271px;height:168px;border-radius:10px;background:#191919;box-shadow:0 0 8px rgba(0,0,0,0.55)"></div>
<svg class="a" style="left:1920px;top:438px" width="26" height="12" viewBox="0 0 26 12"><path d="M2 12L13 1L24 12Z" fill="#191919"/></svg>
<div class="a" style="left:1701px;top:577px;width:263px;height:34px;border-radius:8px;background:#212121"></div>
<svg class="a" style="left:1708px;top:459px" width="20" height="20" viewBox="0 0 24 24"><path fill="#ebebeb" d="M9,3V4H4V6H5V19A2,2 0 0,0 7,21H17A2,2 0 0,0 19,19V6H20V4H15V3H9M9,8H11V17H9V8M13,8H15V17H13V8Z"/></svg>
<div class="a nc" style="left:1735px;top:459px;line-height:18px">Konto löschen</div>
<svg class="a" style="left:1708px;top:493px" width="20" height="20" viewBox="0 0 24 24"><path fill="#ebebeb" d="M9,3V4H4V6H5V19A2,2 0 0,0 7,21H17A2,2 0 0,0 19,19V6H20V4H15V3H9M9,8H11V17H9V8M13,8H15V17H13V8Z"/></svg>
<div class="a nc" style="left:1735px;top:493px;line-height:18px">Alle Geräte trennen und lokale</div>
<svg class="a" style="left:1708px;top:550px" width="20" height="20" viewBox="0 0 24 24"><path fill="#ebebeb" d="M19,6.41L17.59,5L12,10.59L6.41,5L5,6.41L10.59,12L5,17.59L6.41,19L12,13.41L17.59,19L19,17.59L13.41,12L19,6.41Z"/></svg>
<div class="a nc" style="left:1735px;top:551px;line-height:18px">Konto deaktivieren</div>
<svg class="a" style="left:1708px;top:584px" width="20" height="20" viewBox="0 0 24 24"><path fill="#ebebeb" d="M12,4A4,4 0 0,1 16,8A4,4 0 0,1 12,12A4,4 0 0,1 8,8A4,4 0 0,1 12,4M12,14C16.42,14 20,15.79 20,18V20H4V18C4,15.79 7.58,14 12,14Z"/></svg>
<div class="a nc" style="left:1735px;top:585px;line-height:18px">Nachahmen</div>
<div class="a nc" style="left:1735px;top:517px;line-height:18px">Daten löschen</div>
<svg class="a" style="left:1796px;top:582px" width="14" height="20" viewBox="0 0 14 20"><path d="M1 1V16L4.8 12.6L7.6 18.8L10.2 17.6L7.5 11.6H12.5Z" fill="#000" stroke="#fff" stroke-width="1.2" stroke-linejoin="round"/></svg>
<div id="winborder"></div>
</body></html>
